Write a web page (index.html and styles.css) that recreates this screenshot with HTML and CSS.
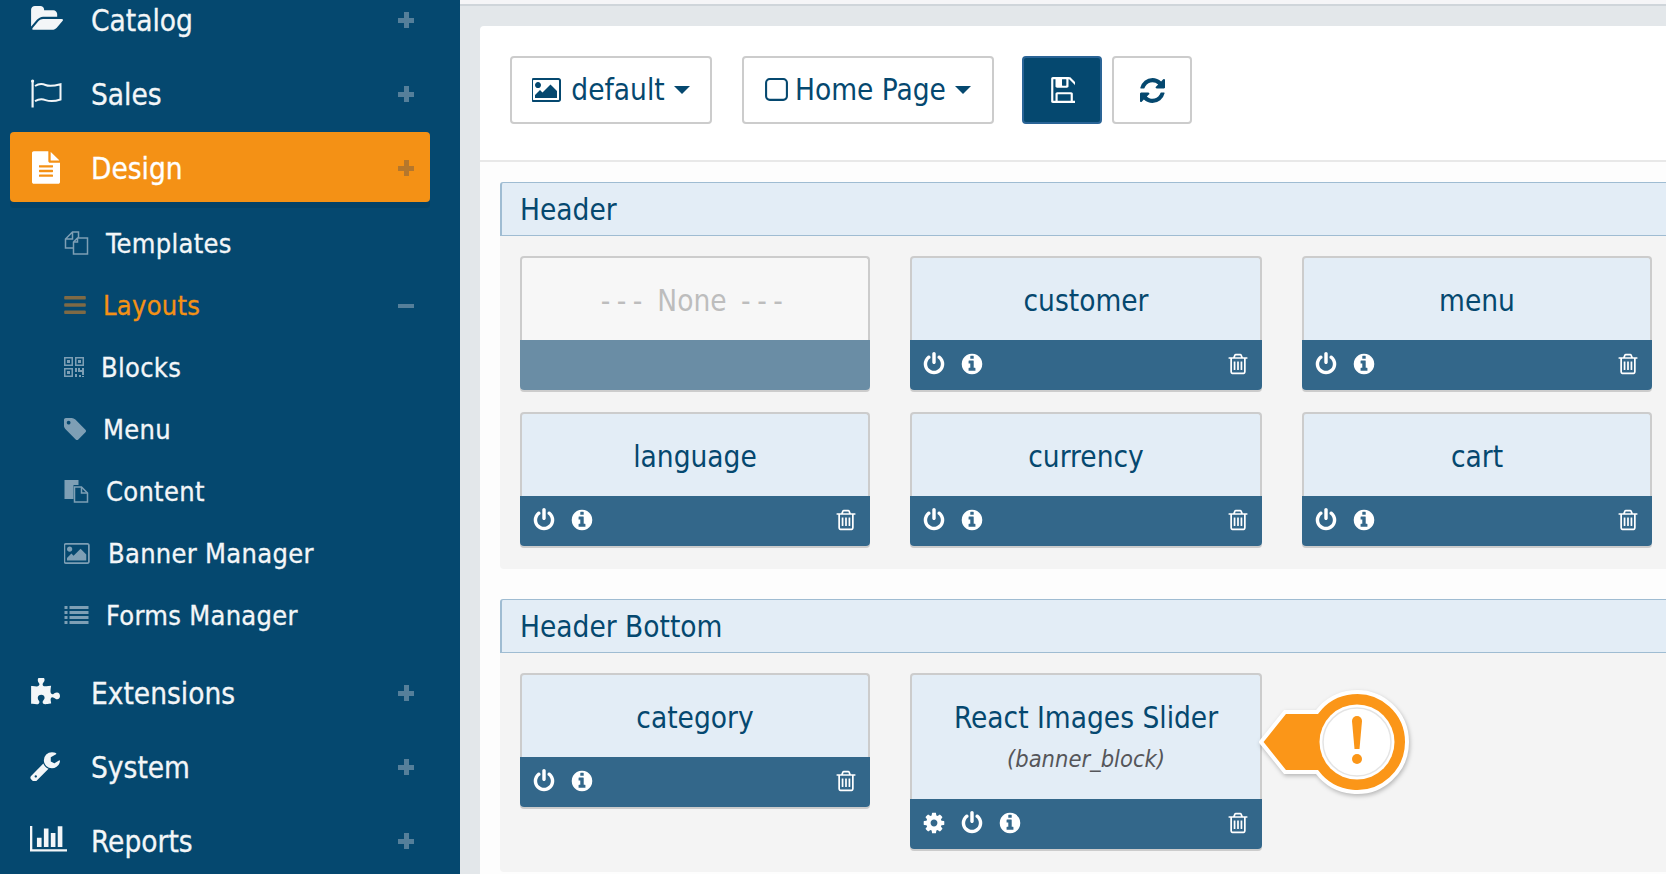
FILE: index.html
```html
<!DOCTYPE html>
<html lang="en">
<head>
    <meta charset="UTF-8">
    <meta name="viewport" content="width=device-width, initial-scale=1.0">
    <title>Layouts</title>
    <link rel="stylesheet" href="styles.css">
</head>
<body>
    <svg class="sprite" width="0" height="0">
        <symbol id="i-folder" viewBox="0 128 1943 1536"><path d="M1943 952q0 31-31 66l-336 396q-43 51-120.5 86.5t-143.5 35.5h-1088q-34 0-60.5-13t-26.5-43q0-31 31-66l336-396q43-51 120.5-86.5t143.5-35.5h1088q34 0 60.5 13t26.5 43zm-343-344v160h-832q-94 0-197 47.5t-164 119.5l-337 396-5 6q0-4-.5-12.5t-.5-12.5v-960q0-92 66-158t158-66h320q92 0 158 66t66 158v32h544q92 0 158 66t66 158z"/></symbol>
        <symbol id="i-flag" viewBox="0 0 32 29"><circle cx="2.600" cy="2" r="1.600"/><path d="M1.500 2h2.200v26.500h-2.200z"/><path d="M5 7c4-2.500 7-2.500 10.500-1s6.500 1.500 15-.8v15.300c-7 2.400-11 2-15 .6s-6.500-1.200-10.500 1" fill="none" stroke="currentColor" stroke-width="2"/></symbol>
        <symbol id="i-file" viewBox="128 0 1536 1792"><path d="M1596 476q14 14 28 36h-472v-472q22 14 36 28zm-476 164h544v1056q0 40-28 68t-68 28h-1344q-40 0-68-28t-28-68v-1600q0-40 28-68t68-28h800v544q0 40 28 68t68 28zm160 736v-64q0-14-9-23t-23-9h-704q-14 0-23 9t-9 23v64q0 14 9 23t23 9h704q14 0 23-9t9-23zm0-256v-64q0-14-9-23t-23-9h-704q-14 0-23 9t-9 23v64q0 14 9 23t23 9h704q14 0 23-9t9-23zm0-256v-64q0-14-9-23t-23-9h-704q-14 0-23 9t-9 23v64q0 14 9 23t23 9h704q14 0 23-9t9-23z"/></symbol>
        <symbol id="i-puzzle" viewBox="0 64 1728 1664"><path d="M1728 1098q0 81-44.500 135t-123.500 54q-41 0-77.500-17.500t-59-38-56.500-38-71-17.500q-110 0-110 124 0 39 16 115t15 115v5q-22 0-33 1-34 3-97.500 11.500t-115.500 13.500-98 5q-61 0-103-26.500t-42-83.500q0-37 17.500-71t38-56.500 38-59 17.500-77.500q0-79-54-123.500t-135-44.500q-84 0-143 45.500t-59 127.500q0 43 15 83t33.500 64.500 33.500 53 15 50.500q0 45-46 89-37 35-117 35-95 0-245-24-9-2-27.500-4t-27.500-4l-13-2q-1 0-3-1-2 0-2-1v-1024q2 1 17.500 3.500t34 5 21.500 3.500q150 24 245 24 80 0 117-35 46-44 46-89 0-22-15-50.500t-33.500-53-33.500-64.500-15-83q0-82 59-127.500t144-45.500q80 0 134 44.500t54 123.500q0 41-17.500 77.500t-38 59-38 56.500-17.500 71q0 57 42 83.500t103 26.500q64 0 180-15t163-17v2q-1 2-3.500 17.500t-5 34-3.500 21.500q-24 150-24 245 0 80 35 117 44 46 89 46 22 0 50.500-15t53-33.500 64.500-33.500 83-15q82 0 127.500 59t45.500 143z"/></symbol>
        <symbol id="i-wrench" viewBox="64 64 1664 1664"><path d="M448 1472q0-26-19-45t-45-19-45 19-19 45 19 45 45 19 45-19 19-45zm644-420l-682 682q-37 37-90 37-52 0-91-37l-106-108q-38-36-38-90 0-53 38-91l681-681q39 98 114.500 173.500t173.500 114.500zm634-435q0 39-23 106-47 134-164.500 217.500t-258.500 83.500q-185 0-316.500-131.500t-131.500-316.500 131.500-316.500 316.500-131.500q58 0 121.500 16.500t107.500 46.500q16 11 16 28t-16 28l-293 169v224l193 107q5-3 79-48.500t135.500-81 70.500-35.500q15 0 23.500 10t8.500 25z"/></symbol>
        <symbol id="i-chart" viewBox="0 256 2048 1536"><path d="M640 896v512h-256v-512h256zm384-512v1024h-256v-1024h256zm1024 1152v128h-2048v-1536h128v1408h1920zm-640-896v768h-256v-768h256zm384-384v1152h-256v-1152h256z"/></symbol>
        <symbol id="i-files" viewBox="0 0 24 24"><path d="M8 1h6v6M14 1 L8 1 L1 8 V17 H9 M8 1 V8 H1" fill="none" stroke="currentColor" stroke-width="1.500"/><path d="M13 7h10v16H9V11zM13 7v4H9" fill="none" stroke="currentColor" stroke-width="1.500"/></symbol>
        <symbol id="i-bars" viewBox="128 256 1536 1280"><path d="M1664 1344v128q0 26-19 45t-45 19h-1408q-26 0-45-19t-19-45v-128q0-26 19-45t45-19h1408q26 0 45 19t19 45zm0-512v128q0 26-19 45t-45 19h-1408q-26 0-45-19t-19-45v-128q0-26 19-45t45-19h1408q26 0 45 19t19 45zm0-512v128q0 26-19 45t-45 19h-1408q-26 0-45-19t-19-45v-128q0-26 19-45t45-19h1408q26 0 45 19t19 45z"/></symbol>
        <symbol id="i-qr" viewBox="0 0 20 20"><path fill-rule="evenodd" d="M0 0h9v9H0zM1.500 1.500v6h6v-6zM3 3h3v3H3zM11 0h9v9h-9zM12.500 1.500v6h6v-6zM14 3h3v3h-3zM0 11h9v9H0zM1.500 12.500v6h6v-6zM3 14h3v3H3zM11 11h2v4h-2zM14 11h2v2h2v-2h2v7h-2v-3h-4zM11 17h2v3h-2zM15 18h2v2h-2zM18 19h2v1h-2z"/></symbol>
        <symbol id="i-tag" viewBox="128 128 1515 1515"><path d="M576 448q0-53-37.500-90.500t-90.500-37.500-90.500 37.500-37.500 90.500 37.500 90.500 90.500 37.500 90.500-37.500 37.500-90.500zm1067 576q0 53-37 90l-491 492q-39 37-91 37-53 0-90-37l-715-716q-38-37-64.500-101t-26.500-117v-416q0-52 38-90t90-38h416q53 0 117 26.500t102 64.500l715 714q37 39 37 91z"/></symbol>
        <symbol id="i-content" viewBox="0 0 24 24"><path d="M0 1h14v5H9v14H0z"/><path d="M10 8h7l6 6v9H10z" fill="none" stroke="currentColor" stroke-width="1.500"/><path d="M17 8v6h6" fill="none" stroke="currentColor" stroke-width="1.500"/></symbol>
        <symbol id="i-picture" viewBox="0 128 1920 1536"><path d="M576 576q0 80-56 136t-136 56-136-56-56-136 56-136 136-56 136 56 56 136zm1024 384v448h-1408v-192l320-320 160 160 512-512zm96-704h-1600q-13 0-22.500 9.500t-9.500 22.500v1216q0 13 9.500 22.500t22.500 9.500h1600q13 0 22.500-9.500t9.500-22.500v-1216q0-13-9.500-22.500t-22.500-9.500zm160 32v1216q0 66-47 113t-113 47h-1600q-66 0-113-47t-47-113v-1216q0-66 47-113t113-47h1600q66 0 113 47t47 113z"/></symbol>
        <symbol id="i-list" viewBox="0 0 24 20"><path d="M0 1h3v3H0zM5 1h19v3H5zM0 6h3v3H0zM5 6h19v3H5zM0 11h3v3H0zM5 11h19v3H5zM0 16h3v3H0zM5 16h19v3H5z"/></symbol>
        <symbol id="i-square" viewBox="0 128 1408 1536"><path d="M1120 256h-832q-66 0-113 47t-47 113v832q0 66 47 113t113 47h832q66 0 113-47t47-113v-832q0-66-47-113t-113-47zm288 160v832q0 119-84.500 203.500t-203.500 84.500h-832q-119 0-203.500-84.500t-84.500-203.500v-832q0-119 84.500-203.500t203.500-84.500h832q119 0 203.500 84.500t84.500 203.500z"/></symbol>
        <symbol id="i-save" viewBox="0 128 1536 1536"><path d="M512 1536h768v-384h-768v384zm896 0h128v-896q0-14-10-38.500t-20-34.500l-281-281q-10-10-34-20t-39-10v416q0 40-28 68t-68 28h-576q-40 0-68-28t-28-68v-416h-128v1280h128v-416q0-40 28-68t68-28h832q40 0 68 28t28 68v416zm-384-928v-320q0-13-9.500-22.500t-22.500-9.500h-192q-13 0-22.500 9.500t-9.500 22.500v320q0 13 9.500 22.500t22.500 9.500h192q13 0 22.500-9.500t9.500-22.500zm640 32v928q0 40-28 68t-68 28h-1344q-40 0-68-28t-28-68v-1344q0-40 28-68t68-28h928q40 0 88 20t76 48l280 280q28 28 48 76t20 88z"/></symbol>
        <symbol id="i-refresh" viewBox="128 128 1536 1536"><path d="M1639 1056q0 5-1 7-64 268-268 434.500t-478 166.500q-146 0-282.500-55t-243.500-157l-129 129q-19 19-45 19t-45-19-19-45v-448q0-26 19-45t45-19h448q26 0 45 19t19 45-19 45l-137 137q71 66 161 102t187 36q134 0 250-65t186-179q11-17 53-117 8-23 30-23h192q13 0 22.500 9.500t9.500 22.500zm25-800v448q0 26-19 45t-45 19h-448q-26 0-45-19t-19-45 19-45l138-138q-148-137-349-137-134 0-250 65t-186 179q-11 17-53 117-8 23-30 23h-199q-13 0-22.500-9.500t-9.500-22.500v-7q65-268 270-434.500t480-166.500q146 0 284 55.500t245 156.500l130-129q19-19 45-19t45 19 19 45z"/></symbol>
        <symbol id="i-power" viewBox="0 0 1792 1792"><path d="M1664 896q0 156-61 298t-164 245-245 164-298 61-298-61-245-164-164-245-61-298q0-182 80.500-343t226.500-270q43-32 95.500-25t83.500 50q32 42 24.500 94.500t-49.500 84.500q-98 74-151.500 181t-53.500 228q0 104 40.500 198.500t109.500 163.500 163.500 109.500 198.500 40.500 198.500-40.500 163.500-109.500 109.500-163.500 40.500-198.500q0-121-53.500-228t-151.500-181q-42-32-49.500-84.500t24.500-94.500q31-43 84-50t95 25q146 109 226.500 270t80.500 343zm-640-768v640q0 52-38 90t-90 38-90-38-38-90v-640q0-52 38-90t90-38 90 38 38 90z"/></symbol>
        <symbol id="i-info" viewBox="0 0 1792 1792"><path d="M1152 1376v-160q0-14-9-23t-23-9h-96v-512q0-14-9-23t-23-9h-320q-14 0-23 9t-9 23v160q0 14 9 23t23 9h96v320h-96q-14 0-23 9t-9 23v160q0 14 9 23t23 9h448q14 0 23-9t9-23zm-128-896v-160q0-14-9-23t-23-9h-192q-14 0-23 9t-9 23v160q0 14 9 23t23 9h192q14 0 23-9t9-23zm640 416q0 209-103 385.500t-279.500 279.500-385.500 103-385.500-103-279.500-279.500-103-385.500 103-385.500 279.500-279.500 385.500-103 385.500 103 279.500 279.500 103 385.500z"/></symbol>
        <symbol id="i-trash" viewBox="0 0 1792 1792"><path d="M704 736v576q0 14-9 23t-23 9h-64q-14 0-23-9t-9-23v-576q0-14 9-23t23-9h64q14 0 23 9t9 23zm256 0v576q0 14-9 23t-23 9h-64q-14 0-23-9t-9-23v-576q0-14 9-23t23-9h64q14 0 23 9t9 23zm256 0v576q0 14-9 23t-23 9h-64q-14 0-23-9t-9-23v-576q0-14 9-23t23-9h64q14 0 23 9t9 23zm128 724v-948h-896v948q0 22 7 40.500t14.500 27 10.500 8.500h832q3 0 10.500-8.500t14.500-27 7-40.500zm-672-1076h448l-48-117q-7-9-17-11h-317q-10 2-17 11zm928 32v64q0 14-9 23t-23 9h-96v948q0 83-47 143.500t-113 60.500h-832q-66 0-113-58.500t-47-141.500v-952h-96q-14 0-23-9t-9-23v-64q0-14 9-23t23-9h309l70-167q15-37 54-63t79-26h320q40 0 79 26t54 63l70 167h309q14 0 23 9t9 23z"/></symbol>
        <symbol id="i-cog" viewBox="0 0 1792 1792"><path d="M1152 896q0-106-75-181t-181-75-181 75-75 181 75 181 181 75 181-75 75-181zm512-109v222q0 12-8 23t-20 13l-185 28q-19 54-39 91 35 50 107 138 10 12 10 25t-9 23q-27 37-99 108t-94 71q-12 0-26-9l-138-108q-44 23-91 38-16 136-29 186-7 28-36 28h-222q-14 0-24.500-8.500t-11.500-21.500l-28-184q-49-16-90-37l-141 107q-10 9-25 9-14 0-25-11-126-114-165-168-7-10-7-23 0-12 8-23 15-21 51-66.500t54-70.500q-27-50-41-99l-183-27q-13-2-21-12.500t-8-23.500v-222q0-12 8-23t19-13l186-28q14-46 39-92-40-57-107-138-10-12-10-24 0-10 9-23 26-36 98.500-107.500t94.500-71.500q13 0 26 10l138 107q44-23 91-38 16-136 29-186 7-28 36-28h222q14 0 24.500 8.500t11.500 21.500l28 184q49 16 90 37l142-107q9-9 24-9 13 0 25 10 129 119 165 170 7 8 7 22 0 12-8 23-15 21-51 66.500t-54 70.500q26 50 41 98l183 28q13 2 21 12.500t8 23.500z"/></symbol>
    </svg>

    <div class="app">
        <nav class="sidebar">
            <a class="nav-item"><svg class="nav-icon" width="33" height="28"><use href="#i-folder"/></svg><span class="nav-label">Catalog</span><i class="toggle"></i></a>
            <a class="nav-item"><svg class="nav-icon" width="32" height="29"><use href="#i-flag"/></svg><span class="nav-label">Sales</span><i class="toggle"></i></a>
            <a class="nav-item active"><svg class="nav-icon" width="28" height="33"><use href="#i-file"/></svg><span class="nav-label">Design</span><i class="toggle"></i></a>
            <div class="subnav">
                <a class="sub-item"><svg class="sub-icon" width="25" height="24"><use href="#i-files"/></svg>Templates</a>
                <a class="sub-item current"><svg class="sub-icon" width="22" height="18"><use href="#i-bars"/></svg>Layouts<i class="toggle minus"></i></a>
                <a class="sub-item"><svg class="sub-icon" width="20" height="20"><use href="#i-qr"/></svg>Blocks</a>
                <a class="sub-item"><svg class="sub-icon" width="22" height="22"><use href="#i-tag"/></svg>Menu</a>
                <a class="sub-item"><svg class="sub-icon" width="25" height="24"><use href="#i-content"/></svg>Content</a>
                <a class="sub-item"><svg class="sub-icon" width="27" height="21"><use href="#i-picture"/></svg>Banner Manager</a>
                <a class="sub-item"><svg class="sub-icon" width="25" height="20"><use href="#i-list"/></svg>Forms Manager</a>
            </div>
            <a class="nav-item"><svg class="nav-icon" width="30" height="29"><use href="#i-puzzle"/></svg><span class="nav-label">Extensions</span><i class="toggle"></i></a>
            <a class="nav-item"><svg class="nav-icon" width="30" height="30"><use href="#i-wrench"/></svg><span class="nav-label">System</span><i class="toggle"></i></a>
            <a class="nav-item"><svg class="nav-icon" width="37" height="28"><use href="#i-chart"/></svg><span class="nav-label">Reports</span><i class="toggle"></i></a>
        </nav>

        <main class="main">
            <div class="panel">
                <div class="toolbar">
                    <button class="btn btn-default"><svg width="30" height="24"><use href="#i-picture"/></svg>default<i class="caret"></i></button>
                    <button class="btn btn-home"><svg width="23" height="25"><use href="#i-square"/></svg>Home Page<i class="caret"></i></button>
                    <button class="btn btn-square btn-save"><svg width="26" height="26"><use href="#i-save"/></svg></button>
                    <button class="btn btn-square"><svg width="25" height="25"><use href="#i-refresh"/></svg></button>
                </div>

                <div class="content">
                    <section class="position">
                        <h2 class="position-title">Header</h2>
                        <div class="position-body">
                            <div class="block empty">
                                <div class="block-name"><span class="block-none"><span class="dashes">---</span> None <span class="dashes">---</span></span></div>
                                <div class="block-foot"></div>
                            </div>
                            <div class="block">
                                <div class="block-name">customer</div>
                                <div class="block-foot"><svg><use href="#i-power"/></svg><svg><use href="#i-info"/></svg><svg class="trash"><use href="#i-trash"/></svg></div>
                            </div>
                            <div class="block">
                                <div class="block-name">menu</div>
                                <div class="block-foot"><svg><use href="#i-power"/></svg><svg><use href="#i-info"/></svg><svg class="trash"><use href="#i-trash"/></svg></div>
                            </div>
                            <div class="block">
                                <div class="block-name">language</div>
                                <div class="block-foot"><svg><use href="#i-power"/></svg><svg><use href="#i-info"/></svg><svg class="trash"><use href="#i-trash"/></svg></div>
                            </div>
                            <div class="block">
                                <div class="block-name">currency</div>
                                <div class="block-foot"><svg><use href="#i-power"/></svg><svg><use href="#i-info"/></svg><svg class="trash"><use href="#i-trash"/></svg></div>
                            </div>
                            <div class="block">
                                <div class="block-name">cart</div>
                                <div class="block-foot"><svg><use href="#i-power"/></svg><svg><use href="#i-info"/></svg><svg class="trash"><use href="#i-trash"/></svg></div>
                            </div>
                        </div>
                    </section>

                    <section class="position">
                        <h2 class="position-title">Header Bottom</h2>
                        <div class="position-body">
                            <div class="block">
                                <div class="block-name">category</div>
                                <div class="block-foot"><svg><use href="#i-power"/></svg><svg><use href="#i-info"/></svg><svg class="trash"><use href="#i-trash"/></svg></div>
                            </div>
                            <div class="block tall">
                                <div class="block-name">React Images Slider<small>(banner_block)</small></div>
                                <div class="block-foot"><svg><use href="#i-cog"/></svg><svg><use href="#i-power"/></svg><svg><use href="#i-info"/></svg><svg class="trash"><use href="#i-trash"/></svg></div>
                                <!-- callout pointing at the block -->
                                <svg class="callout" width="170" height="125" viewBox="0 0 170 125">
                                    <path d="M2 60 L26 30 H58 A50 50 0 1 1 58 90 H26 Z" fill="#fb9618" stroke="#fff" stroke-width="4" stroke-linejoin="miter"/>
                                    <circle cx="98" cy="60" r="37.500" fill="#fff"/>
                                    <circle cx="98" cy="60" r="34" fill="none" stroke="#e4e4e4" stroke-width="1.500"/>
                                    <path d="M93 39 a5 5 0 0 1 10 0 L100.500 67 h-5z" fill="#fb9618"/>
                                    <circle cx="98" cy="77" r="5" fill="#fb9618"/>
                                </svg>
                            </div>
                        </div>
                    </section>
                </div>
            </div>
        </main>
    </div>
</body>
</html>
```

FILE: styles.css
```css
body {
    margin: 0;
    height: 874px;
    overflow: hidden;
    font-family: "DejaVu Sans", "Open Sans", Arial, sans-serif;
    font-stretch: condensed;
    color: #05486f;
    background-color: #e3e7ea;
}

.sprite {
    position: absolute;
}

svg {
    fill: currentColor;
    flex: none;
}

.app {
    display: flex;
    height: 874px;
}

/* sidebar */
.sidebar {
    width: 460px;
    flex: none;
    box-sizing: border-box;
    padding: 0 30px 0 10px;
    background-color: #05486f;
    color: #f3f6f8;
    overflow: hidden;
    -webkit-text-stroke: 0.3px;
}

.nav-item {
    display: flex;
    align-items: center;
    height: 70px;
    margin-bottom: 4px;
    padding: 0 16px 0 20px;
    border-radius: 4px;
    font-size: 29.5px;
}

.nav-item:first-child {
    margin-top: -16px;
}

.nav-label {
    position: absolute;
    left: 91px;
    margin-top: 3px;
}

.nav-item.active {
    background-color: #f49115;
    box-shadow: 0 6px 0 rgba(0, 0, 0, 0.08);
    color: #ffffff;
}

.nav-item.active .nav-icon {
    margin-left: 2px;
}

.toggle {
    width: 16px;
    height: 16px;
    margin-left: auto;
    margin-top: 2px;
    background:
        linear-gradient(#557f9a, #557f9a) center / 16px 5px no-repeat,
        linear-gradient(#557f9a, #557f9a) center / 5px 16px no-repeat;
}

.active .toggle {
    background:
        linear-gradient(#b5772c, #b5772c) center / 16px 5px no-repeat,
        linear-gradient(#b5772c, #b5772c) center / 5px 16px no-repeat;
}

.toggle.minus {
    background: linear-gradient(#557f9a, #557f9a) center / 16px 4px no-repeat;
}

.subnav {
    margin: 10px 0 11px;
}

.sub-item {
    display: flex;
    align-items: center;
    height: 62px;
    padding: 0 16px 0 54px;
    font-size: 27px;
    letter-spacing: 0.3px;
}

.sub-icon {
    margin-right: 17px;
    color: #7e9fb5;
}

.sub-item.current {
    color: #f49115;
}

.sub-item.current .sub-icon {
    color: #7f6a45;
}

/* content area */
.main {
    flex: 1;
    min-width: 0;
    padding: 26px 0 0 20px;
    background: linear-gradient(#f5f5f7 4px, #cfd5da 4px, #cfd5da 6px, #e3e7ea 6px);
}

.panel {
    height: 848px;
    background-color: #ffffff;
    border-top-left-radius: 4px;
}

.toolbar {
    display: flex;
    height: 136px;
    box-sizing: border-box;
    padding-top: 30px;
    padding-left: 30px;
    border-bottom: 2px solid #e8e8e8;
}

.btn {
    display: flex;
    align-items: center;
    justify-content: center;
    height: 68px;
    padding: 0;
    box-sizing: border-box;
    border: 2px solid #cccccc;
    border-radius: 4px;
    background-color: #ffffff;
    color: #05486f;
    font-family: inherit;
    font-stretch: inherit;
    font-size: 29.5px;
}

.btn-default {
    width: 202px;
    margin-right: 30px;
}

.btn-default svg {
    margin-right: 9px;
}

.btn-home {
    width: 252px;
    margin-right: 28px;
}

.btn-home svg {
    margin-right: 7px;
}

.btn-square {
    width: 80px;
    margin-right: 10px;
}

.btn-save {
    background-color: #05486f;
    border-color: #2a6496;
    color: #ffffff;
}

.caret {
    margin-left: 9px;
    border-top: 8px solid #05486f;
    border-left: 8px solid transparent;
    border-right: 8px solid transparent;
}

.content {
    height: 712px;
    box-sizing: border-box;
    padding: 20px 0 0 20px;
    background-color: #fdfdfd;
}

.position {
    margin-bottom: 30px;
    width: 1166px;
}

.position-title {
    height: 54px;
    margin: 0;
    padding-left: 18px;
    box-sizing: border-box;
    border: 1px solid #9fbcd2;
    border-left-width: 2px;
    border-right: none;
    border-radius: 3px 0 0 0;
    background-color: #e3edf6;
    font-size: 29.5px;
    font-weight: 400;
    line-height: 54px;
}

.position-body {
    display: grid;
    grid-template-columns: 350px 352px 350px;
    column-gap: 40px;
    row-gap: 22px;
    align-items: start;
    padding: 20px 20px 23px;
    background-color: #f4f4f4;
    border-bottom-left-radius: 4px;
}

/* blocks */
.block {
    position: relative;
    box-sizing: border-box;
    border-radius: 4px;
    box-shadow: 0 2px 0 #cccccc;
}

.block-name {
    display: flex;
    flex-direction: column;
    justify-content: center;
    height: 84px;
    padding-top: 4px;
    box-sizing: border-box;
    border: 2px solid #cccccc;
    border-bottom: none;
    border-radius: 4px 4px 0 0;
    background-color: #e3edf6;
    font-size: 29.5px;
    text-align: center;
}

.block-name small {
    margin-top: 10px;
    color: #55565a;
    font-size: 23.5px;
    font-style: italic;
}

.block-none {
    color: #bdbdbd;
}

.dashes {
    letter-spacing: 6.5px;
}

.dashes:last-child {
    margin-left: 6px;
}

.block-foot {
    display: flex;
    align-items: center;
    gap: 14px;
    height: 50px;
    padding: 0 12px 2px;
    box-sizing: border-box;
    border-radius: 0 0 4px 4px;
    background-color: #33678a;
    color: #ffffff;
}

.block-foot svg {
    width: 24px;
    height: 24px;
}

.block-foot .trash {
    margin-left: auto;
}

.empty .block-name {
    background-color: #f7f7f7;
}

.empty .block-foot {
    background-color: #6a8da5;
}

.tall .block-name {
    height: 126px;
    padding-top: 0;
}

.callout {
    position: absolute;
    top: 9px;
    left: 349px;
    filter: drop-shadow(1px 2px 2px rgba(0, 0, 0, 0.25));
}
```
